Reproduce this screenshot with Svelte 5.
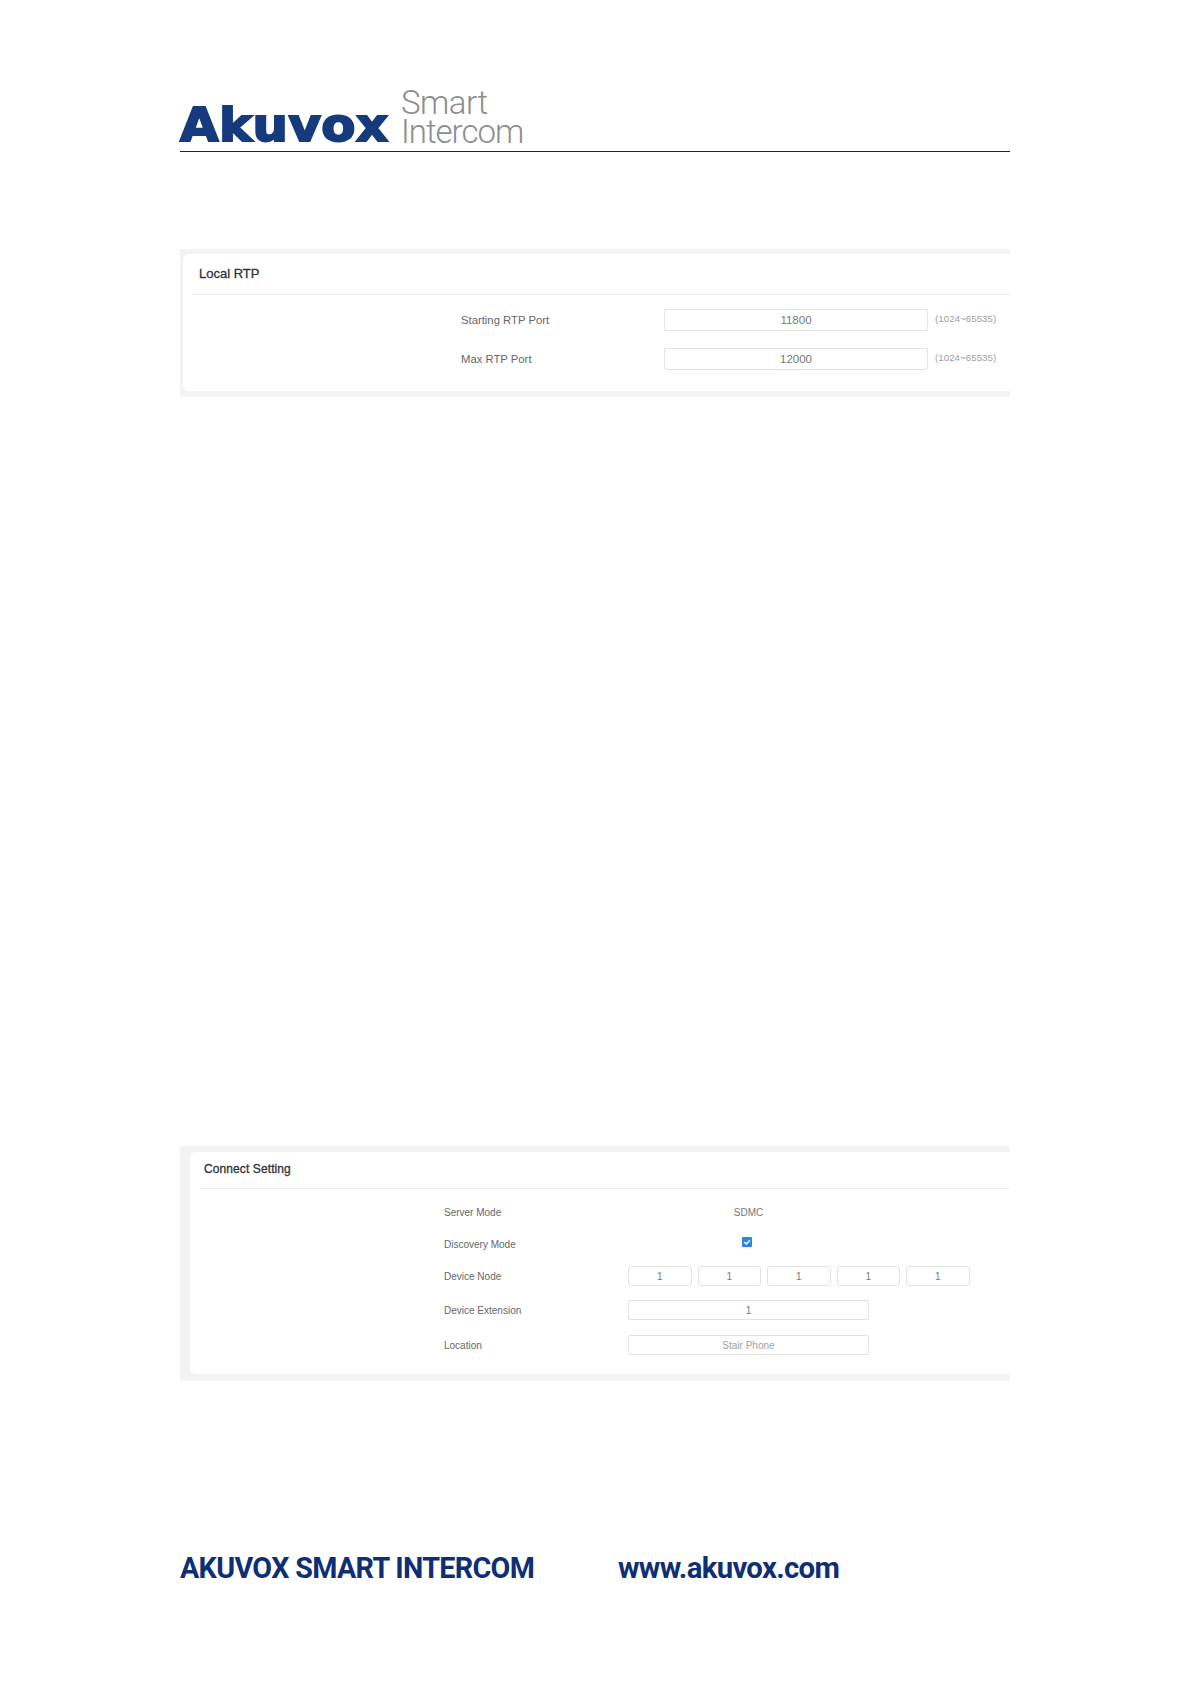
<script>
  const nodes = ['1', '1', '1', '1', '1'];
</script>

<div class="page">
  <header class="head">
    <div class="logo">
      <span class="brand">Akuvox</span>
      <div class="tag">
        <span class="smart">Smart</span>
        <span class="inter">Intercom</span>
      </div>
    </div>
  </header>

  <section class="card rtp">
    <div class="inner">
      <h2>Local RTP</h2>
      <div class="rows">
        <div class="row">
          <span class="label">Starting RTP Port</span>
          <span class="input wide">11800</span>
          <span class="hint">(1024~65535)</span>
        </div>
        <div class="row">
          <span class="label">Max RTP Port</span>
          <span class="input wide">12000</span>
          <span class="hint">(1024~65535)</span>
        </div>
      </div>
    </div>
  </section>

  <section class="card conn">
    <div class="inner">
      <h2>Connect Setting</h2>
      <div class="rows">
        <div class="row r-server">
          <span class="label">Server Mode</span>
          <span class="value">SDMC</span>
        </div>
        <div class="row r-disc">
          <span class="label">Discovery Mode</span>
          <span class="value">
            <svg class="check" viewBox="0 0 10 10" width="10" height="10">
              <rect width="10" height="10" rx="1" fill="#2a86e6" />
              <path d="M2.2 5 L4.3 7 L7.9 3.2" fill="none" stroke="#fff" stroke-width="1.5" />
            </svg>
          </span>
        </div>
        <div class="row r-node">
          <span class="label">Device Node</span>
          <div class="nodes">
            {#each nodes as n}
              <span class="input node">{n}</span>
            {/each}
          </div>
        </div>
        <div class="row r-ext">
          <span class="label">Device Extension</span>
          <span class="input mid">1</span>
        </div>
        <div class="row r-loc">
          <span class="label">Location</span>
          <span class="input mid ph">Stair Phone</span>
        </div>
      </div>
    </div>
  </section>

  <footer class="foot">
    <span class="f1">AKUVOX SMART INTERCOM</span>
    <span class="f2">www.akuvox.com</span>
  </footer>
</div>

<style>
  :global(body) {
    margin: 0;
    background: #fff;
  }
  .page {
    width: 1191px;
    height: 1684px;
    box-sizing: border-box;
    padding: 0 181px 0 180px;
    overflow: hidden;
    font-family: "Liberation Sans", Arial, sans-serif;
    color: #666;
  }
  .head {
    height: 152px;
    box-sizing: border-box;
    border-bottom: 1px solid #222;
    display: flex;
    align-items: flex-end;
  }
  .logo {
    display: flex;
    align-items: flex-end;
    height: 70px;
    padding-bottom: 4px;
  }
  .brand {
    font-family: "DejaVu Sans", sans-serif;
    font-weight: 700;
    font-size: 47px;
    line-height: 44px;
    letter-spacing: 0.4px;
    color: #153a7e;
    -webkit-text-stroke: 2px #153a7e;
    width: 221px;
    transform: scaleX(1.06);
    transform-origin: left;
  }
  .tag {
    display: flex;
    flex-direction: column;
    font-family: Roboto, sans-serif;
    font-weight: 300;
    color: #8b8d8f;
  }
  .smart {
    font-size: 33px;
    line-height: 29px;
    letter-spacing: -0.5px;
  }
  .inter {
    font-size: 33px;
    line-height: 30px;
    letter-spacing: -1px;
  }
  .card {
    background: #f3f3f3;
    box-sizing: border-box;
  }
  .inner {
    background: #fff;
    border-radius: 6px 0 0 6px;
  }
  h2 {
    margin: 0;
    font-weight: 400;
    color: #333;
    -webkit-text-stroke: 0.3px #333;
    border-bottom: 1px solid #ececec;
    box-sizing: border-box;
  }
  .rows {
    display: flex;
    flex-direction: column;
  }
  .row {
    display: flex;
    align-items: center;
  }
  .label {
    display: block;
  }
  .input {
    display: flex;
    align-items: center;
    justify-content: center;
    box-sizing: border-box;
    background: #fff;
    border: 1px solid #e2e2e2;
    border-radius: 2px;
    color: #777;
  }

  .rtp {
    margin-top: 97px;
    height: 148px;
    padding: 5px 0 6px 3px;
  }
  .rtp .inner {
    height: 137px;
  }
  .rtp h2 {
    height: 41px;
    margin-left: 9px;
    padding: 12px 0 0 7px;
    font-size: 13px;
    line-height: 15px;
  }
  .rtp .rows {
    padding: 14px 0 0 278px;
    gap: 17px;
  }
  .rtp .row {
    height: 22px;
    font-size: 11.3px;
  }
  .rtp .label {
    width: 203px;
  }
  .wide {
    width: 264px;
    height: 22px;
    font-size: 11.5px;
  }
  .hint {
    margin-left: 7px;
    font-size: 9.8px;
    color: #a0a0a0;
    position: relative;
    top: -2px;
  }

  .conn {
    margin-top: 749px;
    margin-right: 1px;
    height: 235px;
    padding: 6px 0 7px 10px;
  }
  .conn .inner {
    height: 222px;
  }
  .conn h2 {
    height: 37px;
    margin-left: 10px;
    padding: 10px 0 0 4px;
    font-size: 12px;
    line-height: 14px;
    letter-spacing: 0.1px;
  }
  .conn .rows {
    padding-left: 254px;
  }
  .conn .row {
    font-size: 10px;
  }
  .conn .label {
    width: 184px;
  }
  .r-server {
    margin-top: 16px;
    height: 14px;
  }
  .r-disc {
    margin-top: 18px;
    height: 14px;
  }
  .r-node {
    margin-top: 15px;
    height: 20px;
  }
  .r-ext {
    margin-top: 14px;
    height: 20px;
  }
  .r-loc {
    margin-top: 15px;
    height: 20px;
  }
  .value {
    width: 241px;
    text-align: center;
    color: #777;
  }
  .check {
    display: block;
    margin: -4px 0 0 114px;
  }
  .nodes {
    display: flex;
    gap: 6px;
  }
  .node {
    width: 63.5px;
    height: 20px;
    font-size: 10px;
    border-radius: 3px;
  }
  .mid {
    width: 241px;
    height: 20px;
    font-size: 10px;
  }
  .ph {
    color: #a0a0a0;
  }

  .foot {
    margin-top: 169px;
    display: flex;
    align-items: baseline;
    font-family: Roboto, sans-serif;
    font-weight: 700;
    color: #0e2f74;
    font-size: 30px;
    line-height: 36px;
  }
  .f1 {
    width: 438px;
    letter-spacing: -0.7px;
    white-space: nowrap;
    transform: scaleX(0.957);
    transform-origin: left;
  }
  .f2 {
    letter-spacing: -0.7px;
    white-space: nowrap;
    transform: scaleX(0.978);
    transform-origin: left;
  }
</style>
